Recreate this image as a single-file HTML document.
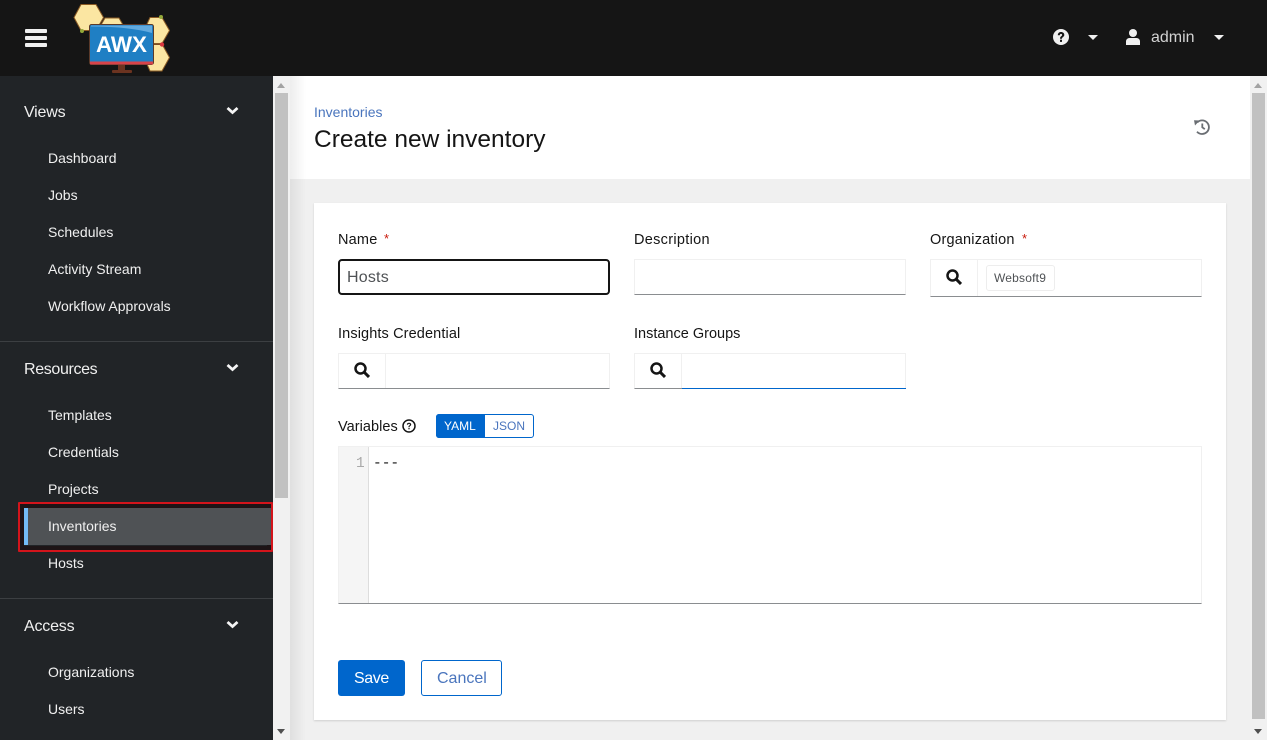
<!DOCTYPE html>
<html><head><meta charset="utf-8"><style>
html,body{margin:0;padding:0;width:1267px;height:740px;overflow:hidden;background:#f0f0f0;font-family:"Liberation Sans",sans-serif}
.a{position:absolute}
.t{position:absolute;white-space:nowrap;line-height:20px}
.nav{color:#f0f0f0;font-size:14px;left:48px}
.sec{color:#f0f0f0;font-size:16px;left:24px;letter-spacing:-.2px}
.lab{color:#151515;font-size:14.5px;letter-spacing:.2px}
.req{color:#c9190b;font-size:13px}
.inp{position:absolute;box-sizing:border-box;background:#fff;border:1px solid #f0f0f0;border-bottom:1px solid #8a8d90}
.sb{position:absolute;width:17px;background:#f1f1f1}
.th{position:absolute;width:13px;background:#c1c1c1}
</style></head><body>
<div class="a" style="left:0;top:0;width:1267px;height:76px;background:#151515"></div>
<div class="a" style="left:25px;top:29px;width:22px;height:4px;background:#f0f0f0;border-radius:1px"></div>
<div class="a" style="left:25px;top:36px;width:22px;height:4px;background:#f0f0f0;border-radius:1px"></div>
<div class="a" style="left:25px;top:43px;width:22px;height:4px;background:#f0f0f0;border-radius:1px"></div>
<svg class="a" style="left:70px;top:0" width="105" height="76" viewBox="70 0 105 76">
<g fill="#fbe6a2" stroke="#8a5a24" stroke-width="1">
<path d="M81 4.500H96L103.500 17.500L96 30.500H81L74 17.500Z"/>
<path d="M105 18H119L126 30L119 42H105L98 30Z"/>
<path d="M150 17.500H162L169.500 30.500L162 43.500H150L144 30.500Z"/>
<path d="M150 44H162L169.500 57.500L162 71H150L144 57.500Z"/>
</g>
<path d="M154 44.500H162" stroke="#7a4a20" stroke-width="1"/>
<circle cx="82" cy="31" r="2" fill="#93a83a"/><circle cx="161" cy="17" r="2" fill="#93a83a"/><circle cx="162" cy="44.500" r="2.200" fill="#d9363e"/>
<rect x="118" y="64" width="7" height="7" fill="#6b3320"/><rect x="112" y="70" width="20" height="3" rx="1" fill="#6b3320"/>
<rect x="89.500" y="24.500" width="64" height="40" rx="2" fill="#1f7fc4" stroke="#5a3a2a"/>
<path d="M91 25.500H152V33C134 28 112 26.500 91 26.500Z" fill="#62aadf"/>
<rect x="90" y="61.500" width="63" height="3" fill="#d8434a"/>
<text x="121.500" y="52" text-anchor="middle" font-family="Liberation Sans" font-weight="700" font-size="22.500" fill="#fff" textLength="51" lengthAdjust="spacingAndGlyphs">AWX</text>
</svg>
<svg class="a" style="left:1053px;top:29px" width="16" height="16" viewBox="0 0 16 16"><circle cx="8" cy="8" r="8" fill="#f0f0f0"/><path d="M4.800 6.200C4.900 4 6.300 3 8 3C9.900 3 11.300 4.100 11.300 5.900C11.300 8 9 8 9 9.800H7C7 7.200 9.100 7.300 9.100 5.900C9.100 5.300 8.700 4.900 8 4.900C7.300 4.900 6.900 5.400 6.800 6.200Z" fill="#151515"/><rect x="7" y="10.700" width="2" height="2.200" fill="#151515"/></svg>
<div class="a" style="left:1088px;top:35px;width:0;height:0;border:5px solid transparent;border-top:5px solid #f0f0f0;border-bottom:0"></div>
<svg class="a" style="left:1126px;top:29px" width="14" height="16" viewBox="0 0 14 16"><circle cx="7" cy="4" r="4" fill="#f0f0f0"/><path d="M0 16V12.500C0 10.500 1.500 9 3.500 9H10.500C12.500 9 14 10.500 14 12.500V16Z" fill="#f0f0f0"/></svg>
<div class="t" style="left:1151px;top:28px;color:#d2d2d2;font-size:16px">admin</div>
<div class="a" style="left:1214px;top:35px;width:0;height:0;border:5.500px solid transparent;border-top:5px solid #f0f0f0;border-bottom:0"></div>

<div class="a" style="left:0;top:76px;width:273px;height:664px;background:#212427"></div>
<div class="t sec" style="top:103px">Views</div>
<div class="t sec" style="top:360px;letter-spacing:-.35px">Resources</div>
<div class="t sec" style="top:617px">Access</div>
<svg class="a" style="left:226px;top:106px" width="13" height="9" viewBox="0 0 13 9"><path d="M1.500 2L6.500 6.500L11.500 2" fill="none" stroke="#f5f5f5" stroke-width="2.800"/></svg>
<svg class="a" style="left:226px;top:363px" width="13" height="9" viewBox="0 0 13 9"><path d="M1.500 2L6.500 6.500L11.500 2" fill="none" stroke="#f5f5f5" stroke-width="2.800"/></svg>
<svg class="a" style="left:226px;top:620px" width="13" height="9" viewBox="0 0 13 9"><path d="M1.500 2L6.500 6.500L11.500 2" fill="none" stroke="#f5f5f5" stroke-width="2.800"/></svg>
<div class="t nav" style="top:148px">Dashboard</div>
<div class="t nav" style="top:185px">Jobs</div>
<div class="t nav" style="top:222px">Schedules</div>
<div class="t nav" style="top:259px">Activity Stream</div>
<div class="t nav" style="top:296px">Workflow Approvals</div>
<div class="a" style="left:0;top:341px;width:273px;height:1px;background:#3c3f42"></div>
<div class="t nav" style="top:405px">Templates</div>
<div class="t nav" style="top:442px">Credentials</div>
<div class="t nav" style="top:479px">Projects</div>
<div class="a" style="box-sizing:border-box;left:18px;top:502px;width:255px;height:50px;border:2px solid #d3141b;border-radius:1px;box-shadow:inset 0 0 0 4px #1d1416"></div>
<div class="a" style="left:24px;top:508px;width:247px;height:37px;background:#4f5255"></div>
<div class="a" style="left:24px;top:508px;width:4px;height:37px;background:#73bcf7"></div>
<div class="t nav" style="top:516px">Inventories</div>
<div class="t nav" style="top:553px">Hosts</div>
<div class="a" style="left:0;top:598px;width:273px;height:1px;background:#3c3f42"></div>
<div class="t nav" style="top:662px">Organizations</div>
<div class="t nav" style="top:699px">Users</div>

<div class="sb" style="left:273px;top:76px;height:664px"></div>
<div class="th" style="left:275px;top:93px;height:405px"></div>
<div class="a" style="left:277px;top:83px;width:0;height:0;border:4px solid transparent;border-bottom:5px solid #a3a3a3;border-top:0"></div>
<div class="a" style="left:277px;top:729px;width:0;height:0;border:4px solid transparent;border-top:5px solid #505050;border-bottom:0"></div>

<div class="a" style="left:290px;top:76px;width:960px;height:103px;background:#fff"></div>
<div class="a" style="left:290px;top:76px;width:16px;height:664px;background:linear-gradient(90deg,rgba(0,0,0,.07),rgba(0,0,0,0))"></div>
<div class="t" style="left:314px;top:102px;color:#4a75bd;font-size:14px">Inventories</div>
<div class="t" style="left:314px;top:126px;color:#151515;font-size:24.5px;line-height:28px">Create new inventory</div>
<svg class="a" style="left:1194px;top:119px" width="16" height="16" viewBox="0 0 16 16"><path d="M3.300 3.400A6.800 6.800 0 1 1 3 12.700" fill="none" stroke="#6a6e73" stroke-width="1.800"/><path d="M0 1.200L5.600 1.500L1 6.500Z" fill="#6a6e73"/><path d="M8.300 4.500V8.300L10.800 10.200" fill="none" stroke="#6a6e73" stroke-width="1.800"/></svg>

<div class="a" style="left:314px;top:203px;width:912px;height:517px;background:#fff;box-shadow:0 1px 2px rgba(0,0,0,.14)"></div>
<div class="t lab" style="left:338px;top:230px">Name</div><div class="t req" style="left:384px;top:229px">*</div>
<div class="t lab" style="left:634px;top:230px;letter-spacing:.3px">Description</div>
<div class="t lab" style="left:930px;top:230px">Organization</div><div class="t req" style="left:1022px;top:229px">*</div>
<div class="a" style="box-sizing:border-box;left:338px;top:259px;width:272px;height:36px;border:2px solid #151515;border-radius:4px;background:#fff"></div>
<div class="t" style="left:347px;top:268px;color:#4f5255;font-size:16px;letter-spacing:.2px">Hosts</div>
<div class="inp" style="left:634px;top:259px;width:272px;height:36px"></div>
<div class="inp" style="left:930px;top:259px;width:272px;height:38px"></div>
<div class="a" style="left:977px;top:260px;width:1px;height:36px;background:#f0f0f0"></div>
<svg class="a" style="left:946px;top:269px" width="16" height="16" viewBox="0 0 16 16"><circle cx="6.500" cy="6.500" r="5" fill="none" stroke="#151515" stroke-width="2.500"/><path d="M10 10L15 15" stroke="#151515" stroke-width="3"/></svg>
<div class="a" style="box-sizing:border-box;left:986px;top:265px;width:69px;height:26px;border:1px solid #ededed;border-radius:3px"></div>
<div class="t" style="left:994px;top:268px;color:#4f5255;font-size:12px;letter-spacing:.2px">Websoft9</div>

<div class="t lab" style="left:338px;top:324px;letter-spacing:.12px">Insights Credential</div>
<div class="t lab" style="left:634px;top:324px;letter-spacing:.0px">Instance Groups</div>
<div class="inp" style="left:338px;top:353px;width:272px;height:36px"></div>
<div class="a" style="left:385px;top:354px;width:1px;height:34px;background:#f0f0f0"></div>
<svg class="a" style="left:354px;top:362px" width="16" height="16" viewBox="0 0 16 16"><circle cx="6.500" cy="6.500" r="5" fill="none" stroke="#151515" stroke-width="2.500"/><path d="M10 10L15 15" stroke="#151515" stroke-width="3"/></svg>
<div class="inp" style="left:634px;top:353px;width:272px;height:36px"></div>
<div class="a" style="left:681px;top:354px;width:1px;height:34px;background:#f0f0f0"></div>
<div class="a" style="left:682px;top:388px;width:224px;height:1px;background:#06c"></div>
<svg class="a" style="left:650px;top:362px" width="16" height="16" viewBox="0 0 16 16"><circle cx="6.500" cy="6.500" r="5" fill="none" stroke="#151515" stroke-width="2.500"/><path d="M10 10L15 15" stroke="#151515" stroke-width="3"/></svg>

<div class="t lab" style="left:338px;top:417px;letter-spacing:.05px">Variables</div>
<svg class="a" style="left:402px;top:419px" width="14" height="14" viewBox="0 0 14 14"><circle cx="7" cy="7" r="6" fill="none" stroke="#151515" stroke-width="1.500"/><path d="M4.800 5.500C5 4.200 6 3.800 7 3.800C8.300 3.800 9.200 4.500 9.200 5.500C9.200 6.900 7.600 6.800 7.600 8.200H6.400C6.400 6.400 7.900 6.500 7.900 5.600C7.900 5.100 7.500 4.900 7 4.900C6.500 4.900 6.100 5.200 6 5.800Z" fill="#151515"/><rect x="6.400" y="9" width="1.200" height="1.300" fill="#151515"/></svg>
<div class="a" style="box-sizing:border-box;left:436px;top:414px;width:98px;height:24px;border:1px solid #06c;border-radius:3px;background:#fff"></div>
<div class="a" style="left:436px;top:414px;width:49px;height:24px;background:#06c;border-radius:3px 0 0 3px"></div>
<div class="t" style="left:444px;top:416px;color:#fff;font-size:12px">YAML</div>
<div class="t" style="left:493px;top:416px;color:#4a75bd;font-size:12px">JSON</div>

<div class="a" style="box-sizing:border-box;left:338px;top:446px;width:864px;height:158px;border:1px solid #f0f0f0;border-bottom:1px solid #8a8d90;background:#fff"></div>
<div class="a" style="left:339px;top:447px;width:29px;height:156px;background:#f5f5f5;border-right:1px solid #ddd"></div>
<div class="t" style="left:356px;top:454px;color:#a9a9a9;font-size:14.5px;font-family:'Liberation Mono',monospace">1</div>
<div class="t" style="left:373px;top:454px;color:#151515;font-size:14.5px;font-family:'Liberation Mono',monospace">---</div>

<div class="a" style="left:338px;top:660px;width:67px;height:36px;background:#06c;border-radius:3px"></div>
<div class="t" style="left:354px;top:669px;color:#fff;font-size:16px;letter-spacing:-.4px">Save</div>
<div class="a" style="box-sizing:border-box;left:421px;top:660px;width:81px;height:36px;border:1px solid #06c;border-radius:3px;background:#fff"></div>
<div class="t" style="left:437px;top:669px;color:#4a75bd;font-size:16px">Cancel</div>

<div class="sb" style="left:1250px;top:76px;height:664px"></div>
<div class="th" style="left:1252px;top:93px;height:626px"></div>
<div class="a" style="left:1254px;top:83px;width:0;height:0;border:4px solid transparent;border-bottom:5px solid #a3a3a3;border-top:0"></div>
<div class="a" style="left:1254px;top:729px;width:0;height:0;border:4px solid transparent;border-top:5px solid #505050;border-bottom:0"></div>
</body></html>
